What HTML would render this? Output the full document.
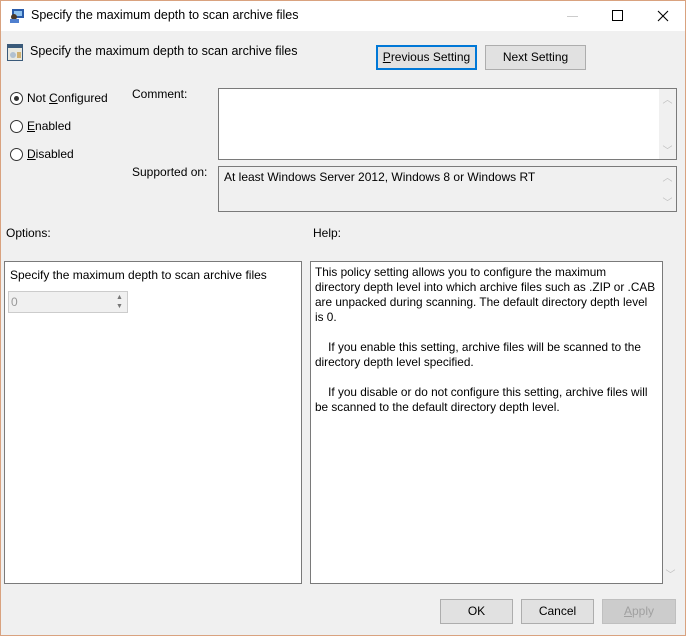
<!DOCTYPE html>
<html><head><style>
*{box-sizing:border-box;margin:0;padding:0}
body{width:686px;height:636px;overflow:hidden;font-family:"Liberation Sans",sans-serif;font-size:12px;color:#000;background:#f0f0f0;position:relative}
.win{position:absolute;left:0;top:0;width:686px;height:636px;border:1px solid #d9a27f;background:#f0f0f0}
.title{position:absolute;left:1px;top:1px;width:684px;height:30px;background:#fff}
.a{position:absolute;white-space:nowrap}
.btn{position:absolute;height:25px;border:1px solid #adadad;background:#e1e1e1;text-align:center;line-height:23px}
.box{position:absolute;background:#fff;border:1px solid #7a7a7a}
.radio{position:absolute;width:13px;height:13px;border:1px solid #333;border-radius:50%;background:#fff}
.sb{position:absolute;background:#f0f0f0;color:#c0c0c0;font-size:10px;text-align:center}
u{text-decoration:underline}
</style></head><body><div class="win"></div>
<div class="title">
<svg class="a" style="left:8px;top:7px" width="16" height="16"><rect x="3" y="1" width="12" height="9" fill="#2a5caa"/><rect x="5" y="3" width="8" height="5" fill="#8fc3f0"/><circle cx="5" cy="9" r="3" fill="#4a3a2a"/><rect x="1" y="11" width="9" height="4" fill="#4f7fcf"/></svg>
<div class="a" style="left:30px;top:7px;font-size:12.5px">Specify the maximum depth to scan archive files</div>
<div class="a" style="left:566px;top:15px;width:11px;height:1px;background:#ccc"></div>
<div class="a" style="left:611px;top:9px;width:11px;height:11px;border:1px solid #000"></div>
<svg class="a" style="left:656px;top:9px" width="12" height="12"><path d="M1 1L11 11M11 1L1 11" stroke="#000" stroke-width="1.1"/></svg>
</div>
<svg class="a" style="left:7px;top:44px" width="16" height="17"><rect x="0" y="0" width="16" height="17" fill="#3a5a7a"/><rect x="1" y="4" width="14" height="12" fill="#e8e8e0"/><circle cx="6" cy="11" r="3" fill="#b0c0d0"/><rect x="10" y="8" width="4" height="6" fill="#d0b070"/></svg>
<div class="a" style="left:30px;top:44px;font-size:12.5px">Specify the maximum depth to scan archive files</div>
<div class="btn" style="left:376px;top:45px;width:101px;border:2px solid #0078d7;line-height:21px"><u>P</u>revious Setting</div>
<div class="btn" style="left:485px;top:45px;width:101px">Next Setting</div>
<div class="radio" style="left:10px;top:92px"><div style="position:absolute;left:3px;top:3px;width:5px;height:5px;border-radius:50%;background:#333"></div></div>
<div class="a" style="left:27px;top:91px">Not <u>C</u>onfigured</div>
<div class="radio" style="left:10px;top:120px"></div>
<div class="a" style="left:27px;top:119px"><u>E</u>nabled</div>
<div class="radio" style="left:10px;top:148px"></div>
<div class="a" style="left:27px;top:147px"><u>D</u>isabled</div>
<div class="a" style="left:132px;top:87px">Comment:</div>
<div class="box" style="left:218px;top:88px;width:459px;height:72px"></div>
<div class="sb" style="left:659px;top:89px;width:17px;height:70px"><div style="margin-top:2px">︿</div><div style="position:absolute;bottom:2px;width:17px">﹀</div></div>
<div class="a" style="left:132px;top:165px">Supported on:</div>
<div class="box" style="left:218px;top:166px;width:459px;height:46px;background:#f0f0f0"></div>
<div class="a" style="left:224px;top:170px">At least Windows Server 2012, Windows 8 or Windows RT</div>
<div class="sb" style="left:659px;top:167px;width:17px;height:44px"><div style="margin-top:2px">︿</div><div style="position:absolute;bottom:2px;width:17px">﹀</div></div>
<div class="a" style="left:6px;top:226px">Options:</div>
<div class="a" style="left:313px;top:226px">Help:</div>
<div class="box" style="left:4px;top:261px;width:298px;height:323px"></div>
<div class="a" style="left:10px;top:268px">Specify the maximum depth to scan archive files</div>
<div class="a" style="left:8px;top:291px;width:120px;height:22px;border:1px solid #ccc;background:#f0f0f0;color:#999;padding:3px 2px">0</div>
<div class="a" style="left:113px;top:293px;width:13px;height:18px;font-size:7px;color:#777;text-align:center;line-height:9px">▲<br>▼</div>
<div class="box" style="left:310px;top:261px;width:353px;height:323px;padding:3px 4px;white-space:nowrap;overflow:hidden;line-height:15px;font-size:11.8px">This policy setting allows you to configure the maximum<br>directory depth level into which archive files such as .ZIP or .CAB<br>are unpacked during scanning. The default directory depth level<br>is 0.<br><br>&nbsp;&nbsp;&nbsp;&nbsp;If you enable this setting, archive files will be scanned to the<br>directory depth level specified.<br><br>&nbsp;&nbsp;&nbsp;&nbsp;If you disable or do not configure this setting, archive files will<br>be scanned to the default directory depth level.</div>
<div class="sb" style="left:663px;top:566px;width:15px;height:16px">﹀</div>
<div class="btn" style="left:440px;top:599px;width:73px">OK</div>
<div class="btn" style="left:521px;top:599px;width:73px">Cancel</div>
<div class="btn" style="left:602px;top:599px;width:74px;background:#ccc;border-color:#bfbfbf;color:#a0a0a0"><u>A</u>pply</div>
</body></html>
